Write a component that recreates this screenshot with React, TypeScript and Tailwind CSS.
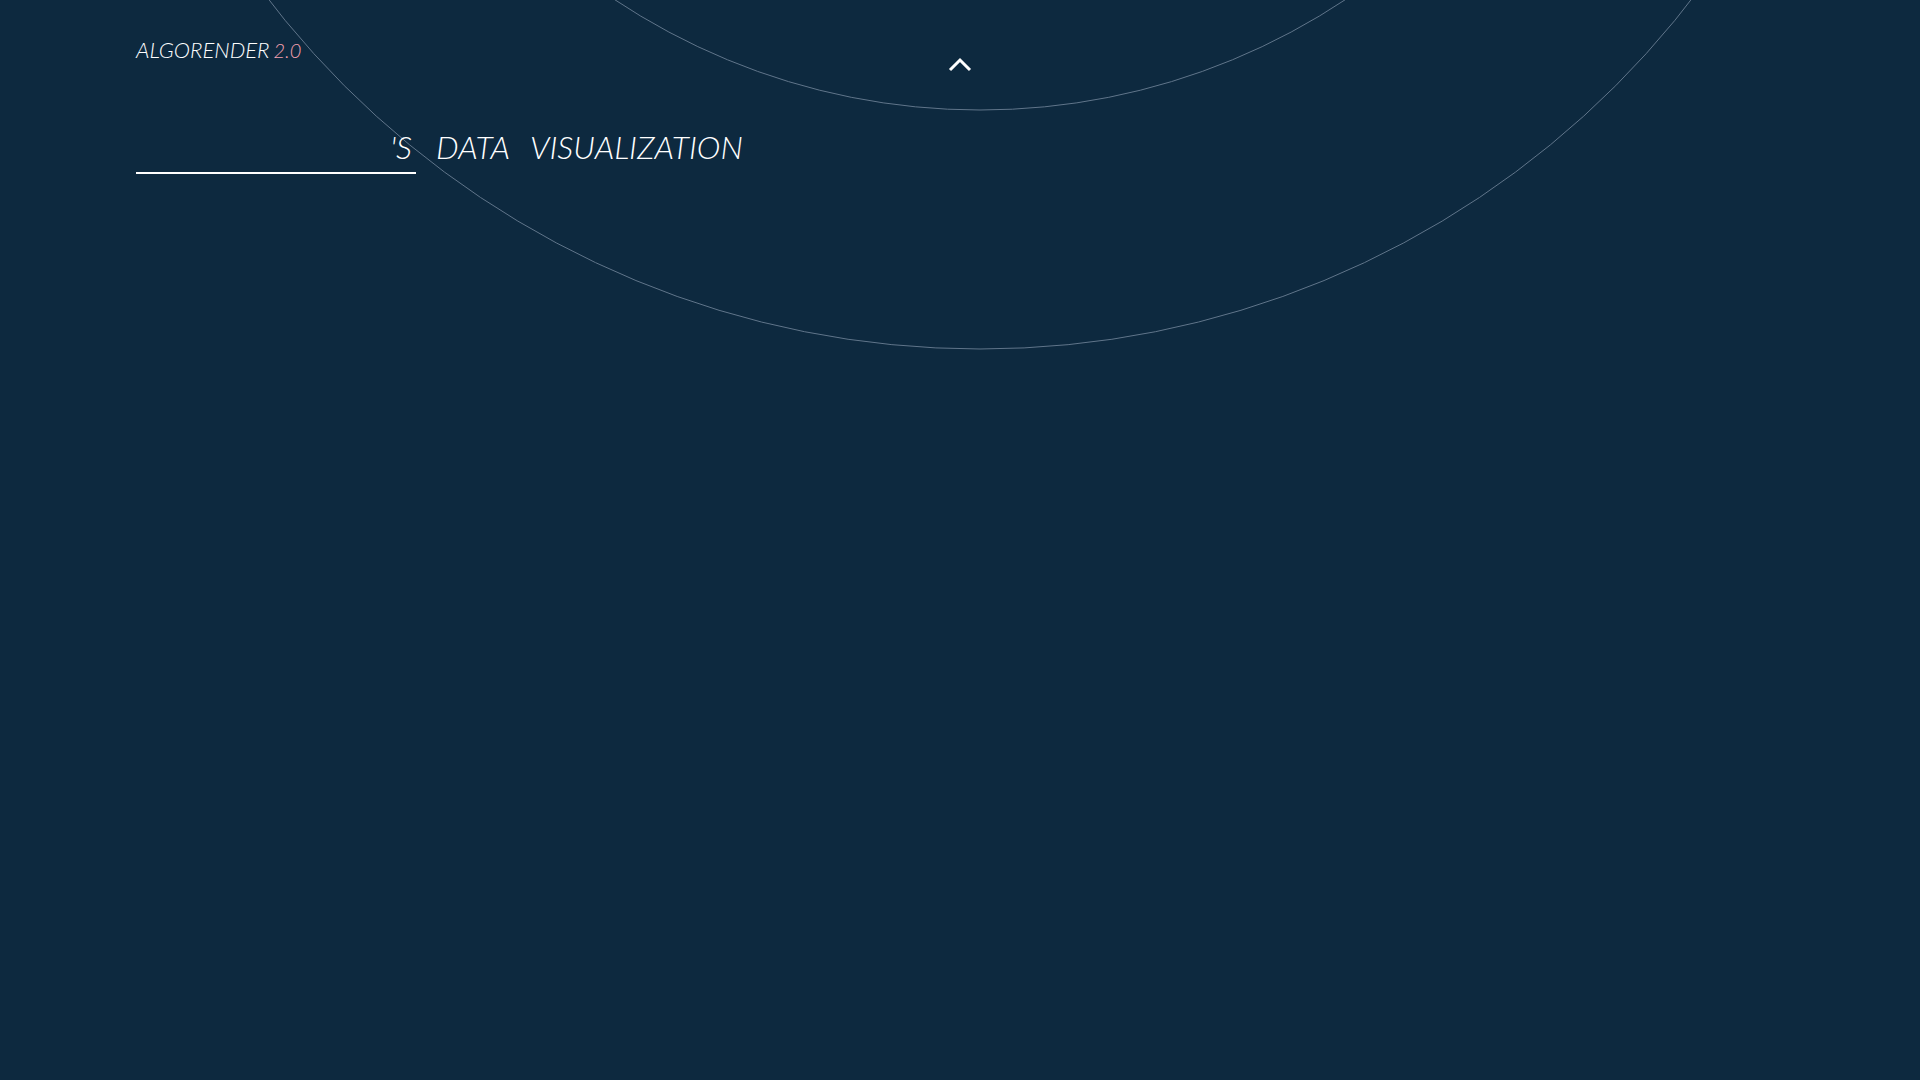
export default function App() {
  return (
    <div className="relative min-h-screen overflow-hidden bg-[#0d293f] font-['Lato',sans-serif] font-light text-white italic">
      <svg
        className="pointer-events-none absolute top-0 left-1/2 h-[360px] w-[1460px] -translate-x-[710px]"
        viewBox="250 0 1460 360"
        fill="none"
        stroke="#60758a"
        aria-hidden="true"
      >
        <circle cx="980" cy="-550" r="660" />
        <circle cx="980" cy="-550" r="899" />
      </svg>

      <header className="relative grid h-[100px] grid-cols-[1fr_auto_1fr] items-center px-[136px]">
        <a href="#" className="flex items-baseline gap-1 leading-6">
          <span className="text-[22px]">ALGORENDER</span>
          <span className="text-[20px] text-[#f5a0b0]">2.0</span>
        </a>
        <button type="button" aria-label="Scroll up" className="mt-7 cursor-pointer">
          <svg width="24" height="16" viewBox="0 0 24 16" fill="none" stroke="currentColor" strokeWidth="3">
            <path d="M2 14 12 4 22 14" />
          </svg>
        </button>
      </header>

      <main className="relative px-[136px] pt-6">
        <h1 className="flex items-start gap-5 text-[32px] leading-[46px]">
          <label className="flex w-[280px] border-b-2 border-white pr-1 pb-[2px]">
            <input type="text" aria-label="Your name" className="min-w-0 flex-1 bg-transparent outline-none" />
            <span>'S</span>
          </label>
          <span>DATA</span>
          <span>VISUALIZATION</span>
        </h1>
      </main>
    </div>
  );
}
